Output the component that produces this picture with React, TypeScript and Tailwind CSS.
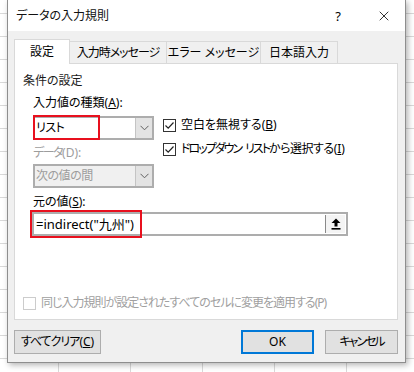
import React from 'react'
import { X } from 'lucide-react'

// Small chevron used in the combo boxes
const Chevron = ({ color = '#606060' }: { color?: string }) => (
  <svg width="9" height="6" viewBox="0 0 9 6">
    <path d="M0.5 0.8 L4.5 4.8 L8.5 0.8" fill="none" stroke={color} strokeWidth="1" />
  </svg>
)

const CheckBox = ({ checked, disabled }: { checked?: boolean; disabled?: boolean }) => (
  <div
    className={`w-[13px] h-[13px] border bg-white flex items-center justify-center shrink-0 ${disabled ? 'border-[#cccccc]' : 'border-[#333333]'}`}
  >
    {checked && (
      <svg width="11" height="11" viewBox="0 0 11 11">
        <path d="M1.5 5.5 L4.2 8.2 L9.5 2.5" fill="none" stroke="#222" strokeWidth="1.2" />
      </svg>
    )}
  </div>
)

const ComboBox = ({ value, disabled, children }: { value: string; disabled?: boolean; children?: React.ReactNode }) => (
  <div
    className={`relative flex w-[121px] h-[24px] border-2 border-[#adadad] ${disabled ? 'bg-[#f0f0f0]' : 'bg-white'}`}
  >
    <div className={`flex-1 flex items-center pl-[1px] tracking-[-0.5px] ${disabled ? 'text-[#9d9d9d]' : 'text-black'}`}>
      {value}
    </div>
    <div className="w-[17px] flex items-center justify-center bg-[#e3e3e3] border-l border-[#c4c4c4]">
      <Chevron />
    </div>
    {children}
  </div>
)

const Tab = ({ label, width, active, tight }: { label: string; width: string; active?: boolean; tight?: boolean }) =>
  active ? (
    <div
      className={`${width} h-[25px] -mb-px relative z-10 bg-white border border-b-0 border-[#d9d9d9] flex items-center justify-center`}
    >
      {label}
    </div>
  ) : (
    <div
      className={`${width} h-[22px] -ml-px bg-[#f0f0f0] border border-b-0 border-[#d9d9d9] flex items-center justify-center ${tight ? 'tracking-[-1px]' : ''}`}
    >
      {label}
    </div>
  )

export default function App() {
  return (
    <div className="relative w-[414px] h-[372px] overflow-hidden bg-white bg-[linear-gradient(to_right,#d9d9d9_1px,transparent_1px),linear-gradient(to_bottom,#d9d9d9_1px,transparent_1px)] bg-size-[72px_23px] bg-position-[-14px_13px] font-['Noto_Sans','Noto_Sans_CJK_JP',sans-serif] text-[12px] leading-[16px] text-black [font-feature-settings:'palt']">
      {/* Dialog window */}
      <div className="ml-[7px] w-[399px] h-[363px] flex flex-col bg-white border-x border-b border-[#8e8e8e] shadow-[2px_2px_6px_rgba(0,0,0,0.3)]">
        {/* Title bar */}
        <div className="h-[31px] flex items-center pl-[8px] shrink-0">
          <span className="text-[12px] text-[#111]">データの入力規則</span>
          <span className="ml-auto mr-[35px] text-[13px]">?</span>
          <X className="w-[16px] h-[16px] mr-[13px]" strokeWidth={1.2} />
        </div>

        {/* Body */}
        <div className="flex-1 bg-[#f0f0f0] pl-[6px] pr-[7px] pt-[8px] pb-[8px] flex flex-col">
          {/* Tabs */}
          <div className="flex items-end">
            <Tab label="設定" width="w-[56px]" active />
            <Tab label="入力時メッセージ" width="w-[98px]" tight />
            <Tab label="エラー メッセージ" width="w-[95px]" />
            <Tab label="日本語入力" width="w-[78px]" />
          </div>

          {/* Panel */}
          <div className="h-[257px] bg-white border border-[#d9d9d9] pl-[8px] pt-[9px]">
            <div className="text-[#1a1a1a]">条件の設定</div>

            <div className="pl-[10px]">
              <div className="mt-[6px]">
                入力値の種類(<span className="underline">A</span>):
              </div>

              <div className="mt-[5px] flex">
                <div className="flex flex-col">
                  <ComboBox value="リスト">
                    <div className="absolute -left-[2px] -top-[3px] w-[67px] h-[25px] border-2 border-[#e8101e]" />
                  </ComboBox>
                  <div className="mt-[5px] text-[#9d9d9d]">
                    <span className="tracking-[-1.5px]">データ</span>(D):
                  </div>
                  <div className="mt-[3px]">
                    <ComboBox value="次の値の間" disabled />
                  </div>
                </div>

                <div className="ml-[9px] flex flex-col">
                  <div className="h-[18px] flex items-center gap-[5px]">
                    <CheckBox checked />
                    <span>
                      空白を無視する(<span className="underline">B</span>)
                    </span>
                  </div>
                  <div className="mt-[6px] h-[18px] flex items-center gap-[5px] whitespace-nowrap">
                    <CheckBox checked />
                    <span>
                      <span className="tracking-[-2px]">ドロップダウン</span>
                      <span className="ml-[4px] tracking-[-2px]">リスト</span>
                      <span className="tracking-[-0.5px]">から選択する</span>(<span className="underline">I</span>)
                    </span>
                  </div>
                </div>
              </div>

              <div className="mt-[6px]">
                元の値(<span className="underline">S</span>):
              </div>

              <div className="relative mt-[2px] -ml-px w-[316px] h-[24px] flex border-2 border-[#adadad] bg-white">
                <div className="flex-1 flex items-center pl-[2px] text-[13px]">=indirect(&quot;九州&quot;)</div>
                <div className="w-[20px] my-[1px] mr-[1px] flex items-center justify-center bg-[#f4f4f4] border-l border-[#8a8a8a]">
                  <svg width="10" height="12" viewBox="0 0 10 12">
                    <path d="M5 0.5 L9.5 5 L6.5 5 L6.5 8.5 L3.5 8.5 L3.5 5 L0.5 5 Z" fill="#000" />
                    <rect x="0.5" y="10" width="9" height="1.6" fill="#000" />
                  </svg>
                </div>
                <div className="absolute -left-[4px] -top-[4px] w-[112px] h-[28px] border-2 border-[#e8101e]" />
              </div>
            </div>

            <div className="mt-[59px] flex items-center gap-[5px] text-[#a0a0a0] whitespace-nowrap">
              <CheckBox disabled />
              <span className="tracking-[-1px]">同じ入力規則が設定されたすべてのセルに変更を適用する(P)</span>
            </div>
          </div>

          {/* Buttons */}
          <div className="mt-[10px] flex">
            <button className="w-[87px] h-[24px] bg-[#e1e1e1] border border-[#adadad] flex items-center justify-center">
              <span className="tracking-[-1px]">すべてクリア</span>(<span className="underline">C</span>)
            </button>
            <button className="ml-auto w-[73px] h-[24px] bg-[#e1e1e1] border-2 border-[#0078d7] flex items-center justify-center">
              OK
            </button>
            <button className="ml-[11px] w-[73px] h-[24px] bg-[#e1e1e1] border border-[#adadad] flex items-center justify-center tracking-[-2px]">
              キャンセル
            </button>
          </div>
        </div>
      </div>
    </div>
  )
}
